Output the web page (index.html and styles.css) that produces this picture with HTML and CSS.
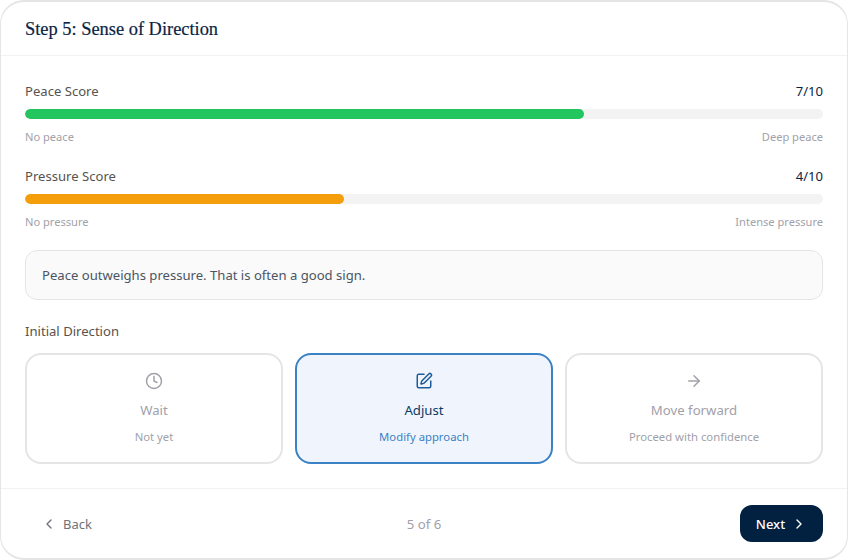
FILE: index.html
```html
<!DOCTYPE html>
<html lang="en">
<head>
<meta charset="utf-8">
<title>Step 5: Sense of Direction</title>
<link rel="stylesheet" href="styles.css">
</head>
<body>
<main class="card">
  <header class="head"><h1 class="title">Step 5: Sense of Direction</h1></header>
  <section class="body">
    <div class="score">
      <div class="score-top"><span class="score-name">Peace Score</span><span class="score-val">7/10</span></div>
      <div class="track"><div class="fill fill-green" style="width:70%"></div></div>
      <div class="score-ends"><span>No peace</span><span>Deep peace</span></div>
    </div>
    <div class="score">
      <div class="score-top"><span class="score-name">Pressure Score</span><span class="score-val">4/10</span></div>
      <div class="track"><div class="fill fill-amber" style="width:40%"></div></div>
      <div class="score-ends"><span>No pressure</span><span>Intense pressure</span></div>
    </div>
    <div class="note">Peace outweighs pressure. That is often a good sign.</div>
    <div class="dir-label">Initial Direction</div>
    <div class="options">
      <div class="opt">
        <svg class="ico" viewBox="0 0 24 24"><circle cx="12" cy="12" r="10"/><path d="M12 6v6l4 2"/></svg>
        <div class="opt-name">Wait</div>
        <div class="opt-sub">Not yet</div>
      </div>
      <div class="opt opt-on">
        <svg class="ico" viewBox="0 0 24 24"><path d="M12 3H5a2 2 0 0 0-2 2v14a2 2 0 0 0 2 2h14a2 2 0 0 0 2-2v-7"/><path d="M18.375 2.625a1 1 0 0 1 3 3l-9.013 9.014a2 2 0 0 1-.853.505l-2.873.84a.5.5 0 0 1-.62-.62l.84-2.873a2 2 0 0 1 .506-.852z"/></svg>
        <div class="opt-name">Adjust</div>
        <div class="opt-sub">Modify approach</div>
      </div>
      <div class="opt">
        <svg class="ico" viewBox="0 0 24 24"><path d="M5 12h14"/><path d="m12 5 7 7-7 7"/></svg>
        <div class="opt-name">Move forward</div>
        <div class="opt-sub">Proceed with confidence</div>
      </div>
    </div>
  </section>
  <footer class="foot">
    <button class="back"><svg class="chev" viewBox="0 0 24 24"><path d="m15 18-6-6 6-6"/></svg>Back</button>
    <span class="count">5 of 6</span>
    <button class="next">Next<svg class="chev" viewBox="0 0 24 24"><path d="m9 18 6-6-6-6"/></svg></button>
  </footer>
</main>
</body>
</html>
```
FILE: styles.css
```css
* { box-sizing: border-box; }
html, body { margin: 0; height: 100%; background: #fff; }
body { font-family: "Noto Sans", sans-serif; color: #0f172a; }
.card {
  width: 848px; height: 560px;
  border: 2px solid #e5e5e5; border-left-width: 1px; border-right-width: 1px; border-radius: 24px;
  background: #fff; display: flex; flex-direction: column; overflow: hidden;
}
.head { height: 54px; flex: none; padding: 1px 24px 0; display: flex; align-items: center; border-bottom: 1px solid #f2f2f2; }
.title { margin: 0; font: 400 18.4px "Liberation Serif", serif; color: #0a1f44; -webkit-text-stroke: 0.2px #0a1f44; }
.body { flex: 1; padding: 25px 24px 0; display: flex; flex-direction: column; }
.score { margin-bottom: 21px; display: flex; flex-direction: column; }
.score + .score { margin-bottom: 20px; }
.score-top { display: flex; justify-content: space-between; font-size: 13.1px; line-height: 20px; height: 28px; }
.score-name { color: #57534e; }
.score-val { color: #0a1f44; }
.track { height: 10px; border-radius: 5px; background: #f3f3f3; overflow: hidden; }
.fill { height: 100%; border-radius: 5px; }
.fill-green { background: #22c55e; }
.fill-amber { background: #f59e0b; }
.score-ends { display: flex; justify-content: space-between; margin-top: 10px; font-size: 11.1px; line-height: 16px; color: #a1a1aa; }
.note { height: 50px; padding: 0 16px; display: flex; align-items: center; border: 1px solid #e5e5e5; border-radius: 12px; background: #fafafa; font-size: 13.1px; color: #4b5563; }
.dir-label { margin-top: 21px; font-size: 13.1px; line-height: 20px; color: #57534e; }
.options { margin-top: 12px; display: grid; grid-template-columns: repeat(3, 1fr); gap: 12px; }
.opt { height: 111px; border: 2px solid #e5e5e5; border-radius: 16px; display: flex; flex-direction: column; align-items: center; padding-top: 17px; background: #fff; }
.ico { width: 18px; height: 18px; fill: none; stroke: #a1a1aa; stroke-width: 2; stroke-linecap: round; stroke-linejoin: round; }
.opt-name { margin-top: 10px; font-size: 13.2px; line-height: 20px; color: #a1a1aa; }
.opt-sub { margin-top: 9px; font-size: 11.3px; line-height: 16px; color: #a1a1aa; }
.opt-on { border-color: #3b82c4; background: #f0f5fd; }
.opt-on .ico { stroke: #1d5c99; }
.opt-on .opt-name { color: #0b3a66; }
.opt-on .opt-sub { color: #3b82c4; }
.foot { flex: none; height: 70px; padding: 0 24px; border-top: 1px solid #f2f2f2; display: flex; align-items: center; justify-content: space-between; }
button { font-family: inherit; font-size: 13px; border: 0; cursor: pointer; }
.chev { width: 16px; height: 16px; fill: none; stroke: currentColor; stroke-width: 2; stroke-linecap: round; stroke-linejoin: round; }
.back { background: none; color: #71717a; display: flex; align-items: center; gap: 6px; padding: 0 16px 0 16px; height: 37px; }
.count { font-size: 13.2px; color: #a1a1aa; }
.next { width: 83px; height: 37px; border-radius: 12px; background: #02203f; color: #fff; font-weight: 500; display: flex; align-items: center; justify-content: center; gap: 6px; }
```
